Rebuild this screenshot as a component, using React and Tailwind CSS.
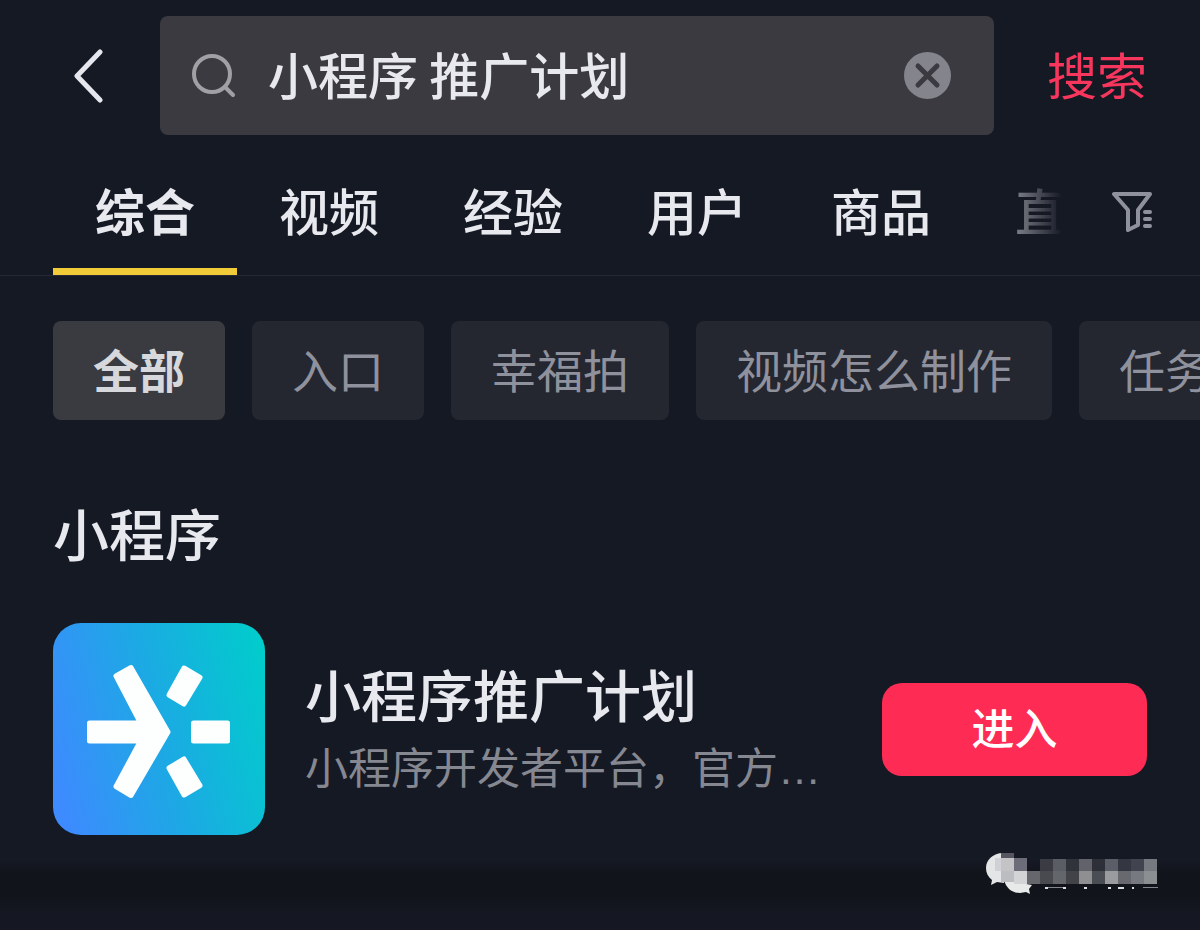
import React, { useState } from 'react';
import clsx from 'clsx';

const tabs = ['综合', '视频', '经验', '用户', '商品', '直播'];
const chips = ['全部', '入口', '幸福拍', '视频怎么制作', '任务中心'];

// censored account name: [x, y, width, height, color]
const mosaic = [
  [41, 23, 13, 5, '#55565f'],
  [35, 28, 6, 13, '#d0d1d6'],
  [41, 28, 13, 13, '#c4c4c7'],
  [54, 28, 13, 13, '#6d6d79'],
  [41, 41, 13, 11, '#bcbdc0'],
  [54, 41, 13, 13, '#d2d4d5'],
  [67, 41, 13, 13, '#65676d'],
  [80, 29, 13, 12, '#3b3c43'],
  [93, 29, 13, 12, '#5b5d65'],
  [106, 29, 13, 12, '#31333b'],
  [119, 29, 13, 12, '#62636a'],
  [132, 29, 13, 12, '#2d3038'],
  [145, 29, 13, 12, '#5b5e67'],
  [158, 29, 13, 12, '#343741'],
  [171, 29, 13, 12, '#41444f'],
  [184, 29, 13, 12, '#767980'],
  [80, 41, 13, 13, '#494a4f'],
  [93, 41, 13, 13, '#63666b'],
  [106, 41, 13, 13, '#424349'],
  [119, 41, 13, 13, '#8f8e91'],
  [132, 41, 13, 13, '#4b4d54'],
  [145, 41, 13, 13, '#999b9f'],
  [158, 41, 13, 13, '#67696e'],
  [171, 41, 13, 13, '#767980'],
  [184, 41, 13, 13, '#8c8f91'],
];

const strokes = [
  [85, 57, 3, 2],
  [88, 57, 15, 1],
  [103, 57, 3, 2],
  [124, 57, 3, 2],
  [148, 57, 3, 2],
  [158, 57, 6, 2],
  [172, 57, 2, 2],
  [183, 57, 15, 1],
];

function BackIcon() {
  return (
    <svg width="30" height="54" viewBox="0 0 30 54" fill="none" stroke="#e6e7ee" strokeWidth="5" strokeLinecap="round" strokeLinejoin="round" aria-hidden="true">
      <path d="M27 3 4 27l23 24" />
    </svg>
  );
}

function SearchIcon() {
  return (
    <svg className="shrink-0" width="44" height="44" viewBox="0 0 44 44" fill="none" stroke="#a0a0a5" strokeWidth="4" strokeLinecap="round" aria-hidden="true">
      <circle cx="20" cy="20" r="18" />
      <path d="m33 33 8 8" />
    </svg>
  );
}

function ClearIcon() {
  return (
    <svg width="48" height="48" viewBox="0 0 48 48" aria-hidden="true">
      <circle cx="23.500" cy="23.500" r="23.500" fill="#84848c" />
      <path d="m14 14 19 19M33 14 14 33" stroke="#3a3a40" strokeWidth="5" strokeLinecap="round" />
    </svg>
  );
}

function FilterIcon() {
  return (
    <svg width="42" height="42" viewBox="0 0 42 42" fill="none" stroke="#8f919c" strokeWidth="4" strokeLinejoin="round" strokeLinecap="round" aria-hidden="true">
      <path d="M2 2h36L26 18v15l-10 5V18Z" />
      <path d="M33 20h5M33 27h5M33 34h5" />
    </svg>
  );
}

function AppLogo() {
  return (
    <svg className="block h-full w-full" viewBox="0 0 212 212" fill="#fdfffe" stroke="#fdfffe" strokeWidth="5" strokeLinejoin="round" aria-hidden="true">
      <path d="M63 53 78 44.500 115 109 78 172.500 63 163.500 87.500 118H36.500V100H87.500Z" />
      <path d="M140.500 100h34v18h-34Z" />
      <path d="M131 45 147 54.500 131 81 116 72Z" />
      <path d="M131 172 147 162.500 131 136 116 145Z" />
    </svg>
  );
}

function Watermark() {
  return (
    <svg width="240" height="95" viewBox="0 5 240 95" aria-hidden="true">
      <path d="M43 23c-10 0-17 7-17 15 0 5 2 9 6 12l-1 5 6-3 7 1Z" fill="#e4e5e7" />
      <path d="M44 50c2 8 8 13 16 13l6-1 4 2-1-5 3-4Z" fill="#e8eae9" />
      {mosaic.map(([x, y, w, h, fill]) => (
        <rect key={`${x}-${y}`} x={x} y={y} width={w} height={h} fill={fill} />
      ))}
      {strokes.map(([x, y, w, h]) => (
        <rect key={x} x={x} y={y} width={w} height={h} fill={h === 2 ? '#dcdddf' : '#85868b'} />
      ))}
    </svg>
  );
}

export default function App() {
  const [query, setQuery] = useState('小程序 推广计划');
  const [activeTab, setActiveTab] = useState('综合');
  const [activeChip, setActiveChip] = useState('全部');

  return (
    <div className="flex min-h-screen flex-col overflow-hidden bg-[#151924] pt-4 font-['Noto_Sans_CJK_SC',sans-serif] text-[#e8e9ef]">
      <form className="flex items-center px-[53px]" onSubmit={(e) => e.preventDefault()}>
        <button type="button" aria-label="返回" className="w-[107px] shrink-0 pl-5">
          <BackIcon />
        </button>
        <div className="flex h-[119px] min-w-0 flex-1 items-center rounded-lg bg-[#3a3a40] pr-[42px] pl-8">
          <SearchIcon />
          <input
            type="text"
            aria-label="搜索内容"
            value={query}
            onChange={(e) => setQuery(e.target.value)}
            className="ml-8 h-[90px] min-w-0 flex-1 bg-transparent pb-1.5 text-[50px] font-medium outline-none"
          />
          <button type="button" aria-label="清除" onClick={() => setQuery('')} className="shrink-0">
            <ClearIcon />
          </button>
        </div>
        <button type="submit" className="w-[153px] shrink-0 pb-1.5 text-right text-[50px] leading-[80px] text-[#f6365d]">
          搜索
        </button>
      </form>

      <div className="mt-4 flex items-center border-b border-[#272a34] pr-[46px] pl-[53px]">
        <nav className="flex min-w-0 flex-1 overflow-hidden [mask-image:linear-gradient(to_left,transparent_4px,rgb(0_0_0/0.45)_46px,black_130px)]">
          {tabs.map((tab) => (
            <button
              key={tab}
              type="button"
              onClick={() => setActiveTab(tab)}
              className={clsx(
                'h-[124px] w-[184px] shrink-0 border-y-[7px] border-transparent pb-2 text-[50px] whitespace-nowrap',
                activeTab === tab ? 'border-b-[#f2cb39] font-bold' : 'font-medium'
              )}
            >
              {tab}
            </button>
          ))}
        </nav>
        <button type="button" aria-label="筛选" className="ml-[46px] shrink-0">
          <FilterIcon />
        </button>
      </div>

      <div className="mt-[45px] flex gap-[27px] overflow-hidden pl-[53px]">
        {chips.map((chip) => (
          <button
            key={chip}
            type="button"
            onClick={() => setActiveChip(chip)}
            className={clsx(
              'h-[99px] shrink-0 rounded-lg px-10 pb-1 text-[46px] whitespace-nowrap',
              activeChip === chip ? 'bg-[#3a3b41] font-bold text-[#d6d8dc]' : 'bg-[#242630] text-[#8f919c]'
            )}
          >
            {chip}
          </button>
        ))}
      </div>

      <section className="mt-[70px] px-[53px]">
        <h2 className="text-[56px] leading-[84px] font-medium">小程序</h2>
        <div className="mt-[49px] flex items-center">
          <div className="h-[212px] w-[212px] shrink-0 rounded-[28px] bg-[linear-gradient(75deg,#3e8aff_5%,#1ca9e4_50%,#00cdcb_98%)]">
            <AppLogo />
          </div>
          <div className="ml-10 min-w-0 flex-1 pb-1">
            <h3 className="text-[56px] leading-[80px] font-medium whitespace-nowrap">小程序推广计划</h3>
            <p className="mt-1 font-['Liberation_Sans','Noto_Sans_CJK_SC',sans-serif] text-[43px] leading-[64px] whitespace-nowrap text-[#858791]">
              小程序开发者平台，官方…
            </p>
          </div>
          <button type="button" className="h-[93px] w-[265px] shrink-0 rounded-[20px] bg-[#fe2c55] pb-1.5 text-[43px] font-medium text-white">
            进入
          </button>
        </div>
      </section>

      <footer className="mt-auto flex justify-end bg-[linear-gradient(#151924_28%,#12141b_40%,#12141b_60%,#151722_85%)]">
        <Watermark />
      </footer>
    </div>
  );
}
